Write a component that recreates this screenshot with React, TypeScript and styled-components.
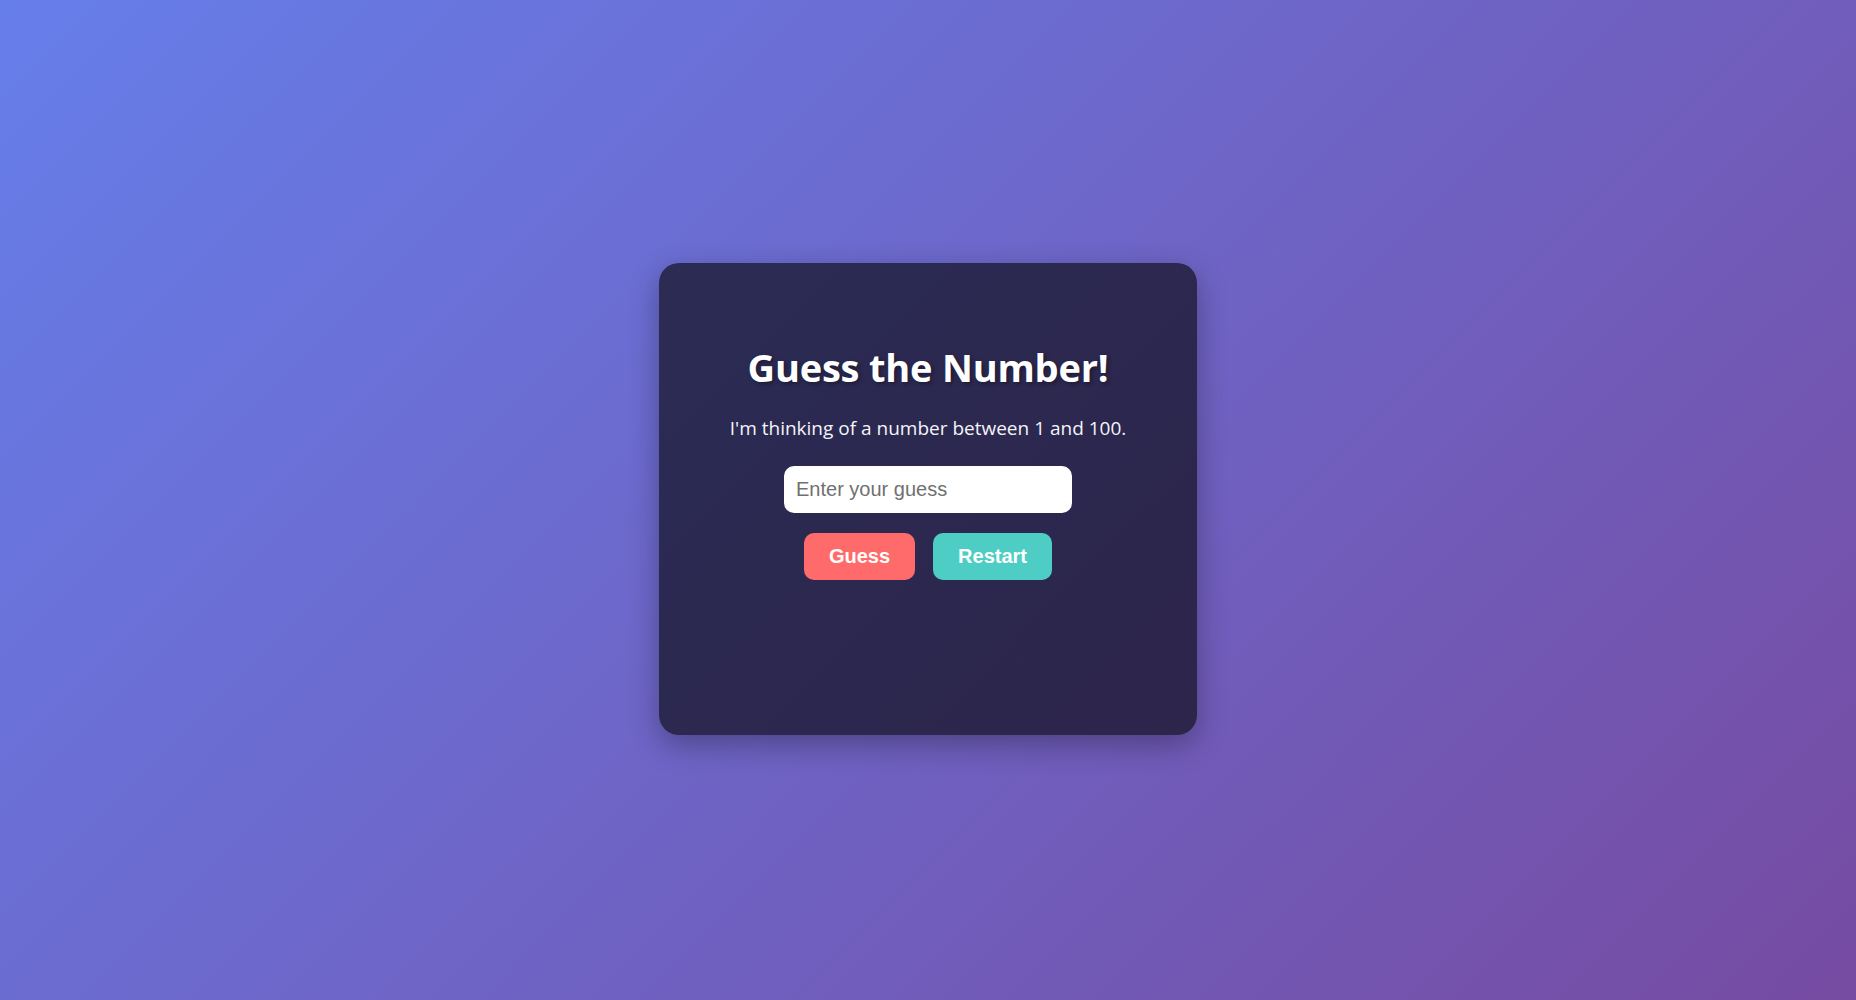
import React, { useState } from "react";
import styled, { createGlobalStyle } from "styled-components";

const GlobalStyle = createGlobalStyle`
  html, body {
    margin: 0;
    padding: 0;
  }
  body {
    min-height: 100vh;
    background: linear-gradient(135deg, #667eea 0%, #764ba2 100%);
    font-family: "Open Sans", "Noto Sans", sans-serif;
  }
  * { box-sizing: border-box; }
`;

const Page = styled.main`
  min-height: 100vh;
  display: flex;
  align-items: center;
  justify-content: center;
`;

const Card = styled.section`
  width: 538px;
  min-height: 472px;
  margin-top: -2px;
  padding: 40px;
  border-radius: 20px;
  background: rgba(0, 0, 0, 0.6);
  box-shadow: 0 10px 30px rgba(0, 0, 0, 0.3);
  display: flex;
  flex-direction: column;
  align-items: center;
  color: #ffffff;
`;

const Title = styled.h1`
  margin: 39px 0 0;
  font-family: "Open Sans", "Noto Sans", sans-serif;
  font-size: 38px;
  font-weight: 700;
  line-height: 1.35;
  color: #ffffff;
  text-shadow: 2px 2px 4px rgba(0, 0, 0, 0.35);
  letter-spacing: -0.2px;
`;

const Lead = styled.p`
  margin: 23px 0 0;
  font-family: "Open Sans", "Noto Sans", sans-serif;
  font-size: 19px;
  line-height: 1.35;
  color: #f4f4f8;
`;

const GuessInput = styled.input`
  margin-top: 24px;
  width: 288px;
  height: 47px;
  padding: 12px;
  border: none;
  border-radius: 10px;
  background: #ffffff;
  font-family: "Liberation Sans", Arial, sans-serif;
  font-size: 20px;
  color: #222;
  outline: none;
  &::placeholder {
    color: #707070;
  }
`;

const ButtonRow = styled.div`
  margin-top: 20px;
  display: flex;
  gap: 18px;
  justify-content: center;
`;

const ActionButton = styled.button<{ $tone: "coral" | "teal" }>`
  height: 47px;
  padding: 12px 25px;
  border: none;
  border-radius: 10px;
  background: ${(p) => (p.$tone === "coral" ? "#ff6b6b" : "#4ecdc4")};
  color: #ffffff;
  font-family: "Liberation Sans", Arial, sans-serif;
  font-size: 20px;
  font-weight: 700;
  line-height: 23px;
  cursor: pointer;
`;

const Message = styled.p`
  margin: 20px 0 0;
  min-height: 28px;
  font-family: "Open Sans", "Noto Sans", sans-serif;
  font-size: 20px;
  color: #ffffff;
`;

export default function App() {
  const [guess, setGuess] = useState("");
  return (
    <>
      <GlobalStyle />
      <Page>
        <Card>
          <Title>Guess the Number!</Title>
          <Lead>I'm thinking of a number between 1 and 100.</Lead>
          <GuessInput
            type="number"
            placeholder="Enter your guess"
            value={guess}
            onChange={(e) => setGuess(e.target.value)}
          />
          <ButtonRow>
            <ActionButton $tone="coral">Guess</ActionButton>
            <ActionButton $tone="teal">Restart</ActionButton>
          </ButtonRow>
          <Message />
        </Card>
      </Page>
    </>
  );
}
